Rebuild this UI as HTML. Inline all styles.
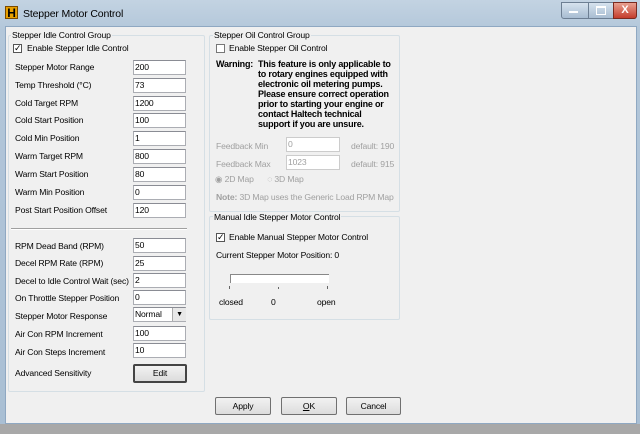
<!DOCTYPE html>
<html><head><style>
body{margin:0;width:640px;height:434px;background:#a8a8a8;font-family:"Liberation Sans",sans-serif;font-size:8.6px;letter-spacing:-0.15px;color:#000;position:relative;overflow:hidden}
.a{position:absolute}
.win{left:0;top:0;width:640px;height:424px;background:linear-gradient(#c3d3e2,#b3c7da 30px,#a9bfd4);}
.client{left:5px;top:26px;width:630px;height:396px;background:#f0f0f0;border:1px solid #8fa8c2;}
.grp{border:1px solid #d5dfe5;border-radius:2px}
.gt{background:#f0f0f0;padding:0 1px}
.in{background:#fff;border:1px solid #abadb3;border-top-color:#8a8c94;width:53px;font-size:8.6px;line-height:13px;padding-left:1px;box-sizing:border-box;height:15px}
.cb{width:9px;height:9px;border:1px solid #555;background:#fff;box-sizing:border-box;font-size:9px;line-height:7px;text-align:center}
.btn{border:1px solid #707070;background:linear-gradient(#f2f2f2,#dcdcdc);text-align:center;line-height:16px;height:18px;box-sizing:border-box;border-radius:2px}
.dis{color:#a0a0a0}
.w{font-weight:bold;font-size:9px;line-height:10px;letter-spacing:-0.2px}
</style></head><body>
<div class="a win"></div>
<div class="a" style="left:5px;top:6px;width:13px;height:13px;background:#e8a000;color:#000;font-weight:bold;font-size:12px;line-height:13px;text-align:center;border:1px solid #7a4a00;box-sizing:border-box">H</div>
<div class="a" style="left:23px;top:8px;font-size:10.5px">Stepper Motor Control</div>
<div class="a" style="left:561px;top:2px;width:27px;height:15px;background:linear-gradient(#d6e2ee,#a8bdd2);border:1px solid #6d7f93;border-radius:0 0 0 3px"></div>
<div class="a" style="left:569px;top:11px;width:9px;height:2px;background:#fff"></div>
<div class="a" style="left:588px;top:2px;width:25px;height:15px;background:linear-gradient(#d6e2ee,#a8bdd2);border:1px solid #6d7f93"></div>
<div class="a" style="left:596px;top:6px;width:8px;height:6px;border:1px solid #fff;border-top-width:2px"></div>
<div class="a" style="left:613px;top:2px;width:22px;height:15px;background:linear-gradient(#e8a090,#c43c2c);border:1px solid #7a2a20;border-radius:0 0 3px 0;color:#fff;font-weight:bold;font-size:11px;text-align:center;line-height:15px">X</div>
<div class="a client"></div>

<div class="a grp" style="left:8px;top:35px;width:195px;height:355px"></div>
<div class="a gt" style="left:11px;top:30px">Stepper Idle Control Group</div>
<div class="a cb" style="left:13px;top:44px">✓</div><div class="a" style="left:27px;top:43px">Enable Stepper Idle Control</div>
<div class="a" style="left:15px;top:62px">Stepper Motor Range</div><div class="a in" style="left:133px;top:60px">200</div>
<div class="a" style="left:15px;top:80px">Temp Threshold (°C)</div><div class="a in" style="left:133px;top:78px">73</div>
<div class="a" style="left:15px;top:98px">Cold Target RPM</div><div class="a in" style="left:133px;top:96px">1200</div>
<div class="a" style="left:15px;top:115px">Cold Start Position</div><div class="a in" style="left:133px;top:113px">100</div>
<div class="a" style="left:15px;top:133px">Cold Min Position</div><div class="a in" style="left:133px;top:131px">1</div>
<div class="a" style="left:15px;top:151px">Warm Target RPM</div><div class="a in" style="left:133px;top:149px">800</div>
<div class="a" style="left:15px;top:169px">Warm Start Position</div><div class="a in" style="left:133px;top:167px">80</div>
<div class="a" style="left:15px;top:187px">Warm Min Position</div><div class="a in" style="left:133px;top:185px">0</div>
<div class="a" style="left:15px;top:205px">Post Start Position Offset</div><div class="a in" style="left:133px;top:203px">120</div>
<div class="a" style="left:11px;top:228px;width:176px;height:1px;background:#a0a0a0;border-bottom:1px solid #fff"></div>
<div class="a" style="left:15px;top:241px">RPM Dead Band (RPM)</div><div class="a in" style="left:133px;top:238px">50</div>
<div class="a" style="left:15px;top:258px">Decel RPM Rate (RPM)</div><div class="a in" style="left:133px;top:256px">25</div>
<div class="a" style="left:15px;top:276px">Decel to Idle Control Wait (sec)</div><div class="a in" style="left:133px;top:273px">2</div>
<div class="a" style="left:15px;top:293px">On Throttle Stepper Position</div><div class="a in" style="left:133px;top:290px">0</div>
<div class="a" style="left:15px;top:311px">Stepper Motor Response</div><div class="a in" style="left:133px;top:307px">Normal</div>
<div class="a" style="left:172px;top:308px;width:13px;height:13px;background:#e8e8e8;border-left:1px solid #aaa;font-size:7px;text-align:center;line-height:13px">▼</div>
<div class="a" style="left:15px;top:329px">Air Con RPM Increment</div><div class="a in" style="left:133px;top:326px">100</div>
<div class="a" style="left:15px;top:347px">Air Con Steps Increment</div><div class="a in" style="left:133px;top:343px">10</div>
<div class="a" style="left:15px;top:368px">Advanced Sensitivity</div>
<div class="a btn" style="left:133px;top:364px;width:54px;height:19px;border:2px solid #444;line-height:15px">Edit</div>

<div class="a grp" style="left:209px;top:35px;width:189px;height:175px"></div>
<div class="a gt" style="left:213px;top:30px">Stepper Oil Control Group</div>
<div class="a cb" style="left:216px;top:44px;border-color:#777"></div><div class="a" style="left:229px;top:43px">Enable Stepper Oil Control</div>
<div class="a w" style="left:216px;top:59px">Warning:</div>
<div class="a w" style="left:258px;top:59px">This feature is only applicable to<br>to rotary engines equipped with<br>electronic oil metering pumps.<br>Please ensure correct operation<br>prior to starting your engine or<br>contact Haltech technical<br>support if you are unsure.</div>
<div class="a dis" style="left:216px;top:141px">Feedback Min</div><div class="a in dis" style="left:286px;top:137px;width:54px;border-color:#ccc">0</div><div class="a dis" style="left:351px;top:141px">default: 190</div>
<div class="a dis" style="left:216px;top:159px">Feedback Max</div><div class="a in dis" style="left:286px;top:155px;width:54px;border-color:#ccc">1023</div><div class="a dis" style="left:351px;top:159px">default: 915</div>
<div class="a dis" style="left:215px;top:174px">◉ 2D Map &nbsp;&nbsp;&nbsp;&nbsp;&nbsp;◌ 3D Map</div>
<div class="a dis" style="left:216px;top:192px"><b>Note:</b> 3D Map uses the Generic Load RPM Map</div>

<div class="a grp" style="left:209px;top:216px;width:189px;height:102px"></div>
<div class="a gt" style="left:213px;top:212px">Manual Idle Stepper Motor Control</div>
<div class="a cb" style="left:216px;top:233px">✓</div><div class="a" style="left:229px;top:232px">Enable Manual Stepper Motor Control</div>
<div class="a" style="left:216px;top:250px">Current Stepper Motor Position: 0</div>
<div class="a" style="left:230px;top:274px;width:98px;height:8px;background:#fff;border-top:1px solid #888;border-left:1px solid #888"></div>
<div class="a" style="left:229px;top:286px;width:1px;height:3px;background:#666"></div>
<div class="a" style="left:278px;top:287px;width:1px;height:2px;background:#666"></div>
<div class="a" style="left:327px;top:286px;width:1px;height:3px;background:#666"></div>
<div class="a" style="left:219px;top:297px">closed</div><div class="a" style="left:271px;top:297px">0</div><div class="a" style="left:317px;top:297px">open</div>

<div class="a btn" style="left:215px;top:397px;width:56px">Apply</div>
<div class="a btn" style="left:281px;top:397px;width:56px"><u>O</u>K</div>
<div class="a btn" style="left:346px;top:397px;width:55px">Cancel</div>
</body></html>
